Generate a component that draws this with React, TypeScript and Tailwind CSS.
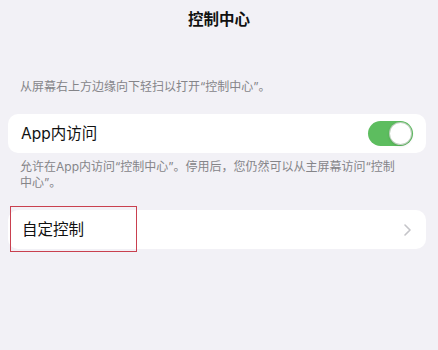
import React from "react";

const font = { fontFamily: '"Inter", "Noto Sans CJK SC", sans-serif' };

export default function App() {
  return (
    <div
      lang="zh-CN"
      className="relative w-[438px] h-[350px] bg-[#f2f1f6] overflow-hidden flex flex-col"
      style={font}
    >
      <div className="h-[38px] flex items-center justify-center pt-[1px]">
        <span className="text-[15.5px] font-semibold text-[#111]">控制中心</span>
      </div>

      <p className="mt-[41px] px-[20px] text-[12px] leading-[16px] text-[#858589]">
        从屏幕右上方边缘向下轻扫以打开“控制中心”。
      </p>

      <div className="mt-[19px] ml-[8px] mr-[12px] h-[39px] rounded-[10px] bg-white flex items-center justify-between pl-[13px] pr-[13px]">
        <span className="text-[15.5px] text-[#111]">App内访问</span>
        <div className="w-[45px] h-[25px] rounded-full bg-[#5dbd5f] flex items-center justify-end pr-[1px]">
          <div className="w-[23px] h-[23px] rounded-full bg-white border border-[#5a8a5a]/40 shadow-sm" />
        </div>
      </div>

      <p className="mt-[6px] pl-[20px] pr-[40px] text-[12px] leading-[15.5px] text-[#858589]">
        允许在App内访问“控制中心”。停用后，您仍然可以从主屏幕访问“控制中心”。
      </p>

      <div className="mt-[20px] ml-[8px] mr-[12px] h-[39px] rounded-[10px] bg-white flex items-center justify-between pl-[14px] pr-[15px]">
        <span className="text-[15.5px] text-[#111]">自定控制</span>
        <svg width="7" height="12" viewBox="0 0 7 12" fill="none">
          <path d="M1 1l5 5-5 5" stroke="#c4c4c8" strokeWidth="1.6" strokeLinecap="round" strokeLinejoin="round" />
        </svg>
      </div>

      <div className="absolute left-[10px] top-[206px] w-[127px] h-[46px] border border-[#c9404f]" />
    </div>
  );
}
